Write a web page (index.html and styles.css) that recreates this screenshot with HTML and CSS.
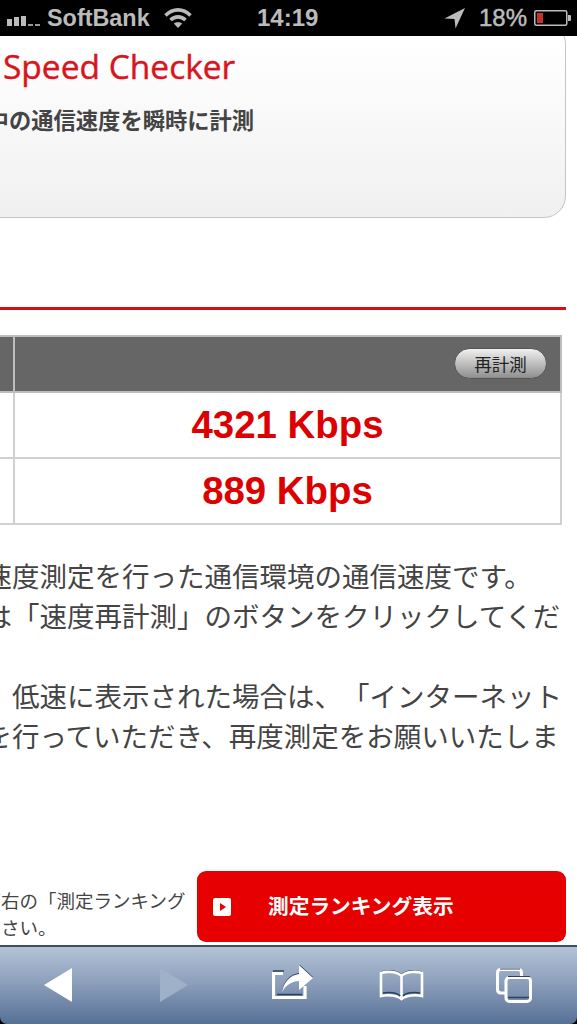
FILE: index.html
```html
<!DOCTYPE html>
<html lang="ja">
<head>
    <meta charset="utf-8" />
    <title>Speed Checker</title>
    <link rel="stylesheet" href="styles.css">
</head>
<body>

<!-- iPhone status bar -->
<header class="status-bar">
    <svg class="signal" width="35" height="10" viewBox="0 0 35 10">
        <rect x="0" y="3" width="5" height="7" fill="#bbb"/>
        <rect x="7" y="1" width="5" height="9" fill="#bbb"/>
        <rect x="14" y="0" width="5" height="10" fill="#bbb"/>
        <rect x="21" y="8" width="5" height="2" fill="#999"/>
        <rect x="28" y="8" width="5" height="2" fill="#999"/>
    </svg>
    <span class="carrier">SoftBank</span>
    <svg class="wifi" width="28" height="22" viewBox="0 0 28 22" fill="none" stroke="#bbb" stroke-width="3.6">
        <path d="M1.5 8.5 C9 1 19 1 26.5 8.5"/>
        <path d="M6.5 13 C11 8.8 17 8.8 21.5 13"/>
        <path d="M14 21 L9.8 16.6 C12 14.7 16 14.7 18.2 16.6 Z" fill="#bbb" stroke="none"/>
    </svg>
    <span class="clock">14:19</span>
    <svg class="location" width="22" height="22" viewBox="0 0 22 22">
        <path d="M21 1 L0.5 11.5 L10.5 12 L11.5 21.5 Z" fill="#bbb"/>
    </svg>
    <span class="battery-text">18%</span>
    <svg class="battery" width="38" height="16" viewBox="0 0 38 16">
        <rect x="0.75" y="0.75" width="32" height="14.5" rx="1.5" fill="none" stroke="#bbb" stroke-width="1.5"/>
        <rect x="3" y="3" width="6" height="10" fill="#c8302c"/>
        <path d="M34 5 H36 Q37 5 37 6 V10 Q37 11 36 11 H34 Z" fill="#bbb"/>
    </svg>
</header>

<main class="page">
    <section class="intro-card">
        <h1>Speed Checker</h1>
        <p>利用中の通信速度を瞬時に計測</p>
    </section>

    <hr class="red-rule">

    <table class="result-table">
        <tr class="head-row">
            <th class="label-col"></th>
            <th class="value-col"><button type="button" class="retry-button">再計測</button></th>
        </tr>
        <tr class="down-row">
            <td class="label-col"></td>
            <td class="value-col">4321 Kbps</td>
        </tr>
        <tr class="up-row">
            <td class="label-col"></td>
            <td class="value-col">889 Kbps</td>
        </tr>
    </table>

    <div class="notes">
        <p>この速度測定を行った通信環境の通信速度です。</p>
        <p>場合は「速度再計測」のボタンをクリックしてくだ</p>
        <p>&nbsp;</p>
        <p>なお、低速に表示された場合は、「インターネット</p>
        <p>接続を行っていただき、再度測定をお願いいたしま</p>
    </div>

    <div class="ranking-row">
        <p class="ranking-note">画面右の「測定ランキング<br>ください。</p>
        <a class="ranking-button">
            <svg width="18" height="18" viewBox="0 0 18 18">
                <rect width="18" height="18" rx="2" fill="#fff"/>
                <path d="M7 5 L13 9 L7 13 Z" fill="#e60000"/>
            </svg>
            <span>測定ランキング表示</span>
        </a>
    </div>
</main>

<!-- Safari toolbar -->
<nav class="toolbar">
    <svg class="tool-back" width="28" height="34" viewBox="0 0 28 34">
        <path d="M28 0 V34 L0 17 Z" fill="#fff"/>
    </svg>
    <svg class="tool-forward" width="28" height="34" viewBox="0 0 28 34">
        <path d="M0 0 V34 L28 17 Z" fill="#9fb0c9"/>
    </svg>
    <svg class="tool-share" width="42" height="35" viewBox="0 0 42 35">
        <path d="M1 6 H12" stroke="#2f3f5c" stroke-width="1.5"/>
        <path d="M11 8.5 H1.5 V32.5 H33 V21" fill="none" stroke="#fff" stroke-width="3.2"/>
        <path d="M5 29.5 H30" stroke="#2f3f5c" stroke-width="1.5"/>
        <path d="M10 27 C12 17 18 10 27 9 V0 L41 13 L27 25 V16 C20 16 14 20 10 27 Z" fill="#2f3f5c" transform="translate(0 -1)"/>
        <path d="M10 27 C12 17 18 10 27 9 V0 L41 13 L27 25 V16 C20 16 14 20 10 27 Z" fill="#fff"/>
    </svg>
    <svg class="tool-book" width="45" height="31" viewBox="0 0 45 31" fill="none">
        <path d="M22.5 5 C18 0.5 8 0 2 2 M22.5 5 C27 0.5 37 0 43 2" stroke="#2f3f5c" stroke-width="1.4"/>
        <path d="M22.5 6 C18 1.5 8 1 2 3 V26 C8 24.5 18 25 22.5 29 C27 25 37 24.5 43 26 V3 C37 1 27 1.5 22.5 6 V27" stroke="#fff" stroke-width="2.6"/>
        <path d="M4 23 C10 22 18 22.5 21 26 M24 26 C27 22.5 35 22 41 23" stroke="#2f3f5c" stroke-width="1.4"/>
    </svg>
    <svg class="tool-tabs" width="36" height="35" viewBox="0 0 36 35" fill="none">
        <path d="M9 25 H5 Q1.5 25 1.5 21.5 V5 Q1.5 1.5 5 1.5 H22 Q25.5 1.5 25.5 5 V8" stroke="#fff" stroke-width="3"/>
        <rect x="10" y="9.5" width="24.5" height="24" rx="3.5" stroke="#fff" stroke-width="3"/>
        <path d="M12 29.5 H33" stroke="#2f3f5c" stroke-width="1.5"/>
        <path d="M4 1 H24 M12 8.5 H34" stroke="#2f3f5c" stroke-width="1"/>
    </svg>
</nav>

</body>
</html>
```

FILE: styles.css
```css
html, body {
    margin: 0;
    padding: 0;
}

body {
    display: flex;
    flex-direction: column;
    width: 577px;
    height: 1024px;
    overflow: hidden;
    background: #000;
    font-family: "Noto Sans CJK JP", "Liberation Sans", sans-serif;
}

p, h1 {
    margin: 0;
}

/* Status bar */
.status-bar {
    display: flex;
    align-items: center;
    flex: none;
    height: 36px;
    padding-left: 7px;
    background: #000;
    color: #bbb;
    font-family: "Liberation Sans", sans-serif;
    font-size: 23.4px;
    font-weight: bold;
    position: relative;
    z-index: 1;
}

.signal {
    margin: 6px 5px 0 0;
}

.carrier {
    width: 103px;
}

.wifi {
    margin-left: 14px;
}

.clock {
    margin-left: 65px;
    width: 62px;
    font-size: 24px;
}

.location {
    margin-left: 125px;
}

.battery-text {
    margin-left: 13px;
    width: 54px;
    font-size: 24px;
    font-weight: normal;
    -webkit-text-stroke: 0.5px #bbb;
}

.battery {
    margin-left: 1px;
}

/* Page is scrolled sideways, so the left part is cut off */
.page {
    flex: 1;
    box-sizing: border-box;
    width: 643px;
    margin-left: -66px;
    padding-right: 11px;
    background: #fff;
}

/* top of the card sits under the status bar */
.intro-card {
    box-sizing: border-box;
    height: 196px;
    margin-top: -14px;
    border: 1px solid #c4c4c4;
    border-radius: 22px;
    padding: 20px 0 0 68px;
    background: linear-gradient(#fff 10%, #f0f0f0);
}

.intro-card h1 {
    color: #d8141c;
    font-family: "Open Sans", sans-serif;
    font-size: 33.5px;
    font-weight: 500;
    line-height: 46px;
    -webkit-text-stroke: 0.4px #d8141c;
}

.intro-card p {
    margin: 14px 0 0 -61px;
    color: #444;
    font-size: 22.3px;
    font-weight: bold;
    line-height: 32px;
    white-space: nowrap;
}

.red-rule {
    height: 3px;
    margin: 89px 0 0;
    border: 0;
    background: #d60f14;
}

.result-table {
    width: 628px;
    margin-top: 25px;
    border-collapse: collapse;
    table-layout: fixed;
}

.result-table th, .result-table td {
    border: 2px solid #d0d0d0;
    padding: 0;
}

.label-col {
    width: 77px;
}

.head-row {
    height: 56px;
    background: #666;
}

.head-row th {
    border-color: #bdbdbd;
    text-align: right;
}

.down-row {
    height: 66px;
}

.up-row {
    height: 66px;
}

.value-col {
    color: #dd0000;
    font-family: "Liberation Sans", sans-serif;
    font-size: 38.4px;
    font-weight: bold;
    text-align: center;
}

.retry-button {
    display: block;
    width: 93px;
    height: 31px;
    margin: -1px 13px 0 auto;
    padding: 0;
    border: 1px solid #555;
    border-radius: 16px;
    background: linear-gradient(#f0f0f0, #8e8e8e);
    color: #222;
    font-family: "Noto Sans CJK JP", sans-serif;
    font-size: 17.5px;
    line-height: 26px;
}

.notes {
    margin: 30px 0 0 -4.5px;
    color: #444;
    font-size: 27.5px;
    line-height: 40px;
    white-space: nowrap;
    text-spacing-trim: space-all;
}

.ranking-row {
    display: flex;
    align-items: flex-start;
    margin-top: 116px;
}

.ranking-note {
    box-sizing: border-box;
    width: 263px;
    margin-top: 16px;
    padding-left: 30px;
    color: #444;
    font-size: 18.5px;
    line-height: 27px;
    white-space: nowrap;
    text-spacing-trim: space-all;
}

.ranking-button {
    display: flex;
    align-items: center;
    box-sizing: border-box;
    width: 369px;
    height: 71px;
    padding-left: 16px;
    border-radius: 9px;
    background: #e60000;
    color: #fff;
    font-size: 20.7px;
    font-weight: bold;
}

.ranking-button span {
    margin: 0 0 3px 37px;
}

/* Safari toolbar */
.toolbar {
    display: flex;
    align-items: flex-start;
    flex: none;
    box-sizing: border-box;
    height: 79px;
    padding-top: 20px;
    border-top: 2px solid #3c4d6c;
    border-radius: 0 0 7px 7px;
    background: linear-gradient(#b3c2d7, #8da0bc 45%, #567096);
}

.tool-back {
    margin: 1px 0 0 44px;
}

.tool-forward {
    margin: 1px 0 0 88px;
}

.tool-share {
    margin: -2px 0 0 84px;
}

.tool-book {
    margin: 3px 0 0 65px;
}

.tool-tabs {
    margin: 1px 0 0 72px;
}
```
